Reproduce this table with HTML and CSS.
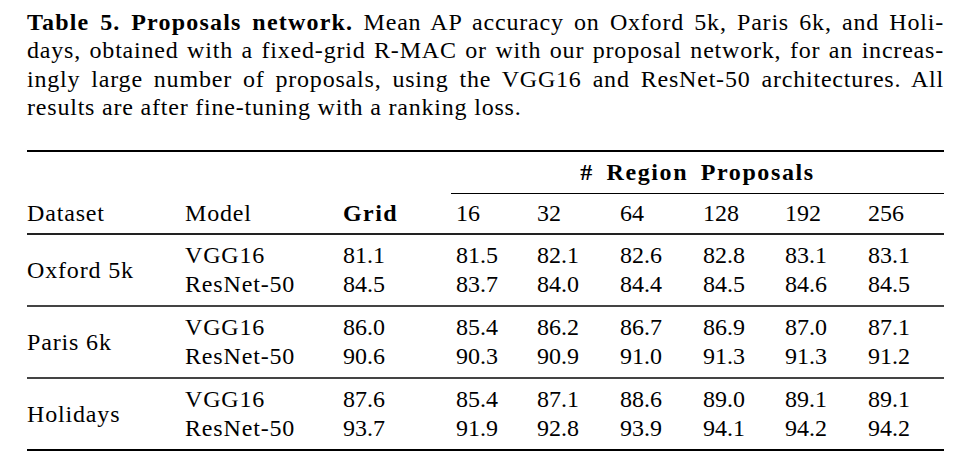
FILE: index.html
```html
<!DOCTYPE html>
<html lang="en">
<head>
<meta charset="utf-8">
<title>Table 5. Proposals network</title>
<link rel="stylesheet" href="styles.css">
</head>
<body>
<div class="page">
  <div class="caption">
    <span class="cap-line"><b class="cap-title">Table 5. Proposals network.</b> Mean AP accuracy on Oxford 5k, Paris 6k, and Holi-</span>
    <span class="cap-line">days, obtained with a fixed-grid R-MAC or with our proposal network, for an increas-</span>
    <span class="cap-line">ingly large number of proposals, using the VGG16 and ResNet-50 architectures. All</span>
    <span class="cap-line cap-last">results are after fine-tuning with a ranking loss.</span>
  </div>

  <table class="results">
    <colgroup>
      <col class="c-dataset">
      <col class="c-model">
      <col class="c-grid">
      <col class="c-16">
      <col class="c-32">
      <col class="c-64">
      <col class="c-128">
      <col class="c-192">
      <col class="c-256">
    </colgroup>
    <thead>
      <tr class="span-row">
        <th class="blank" colspan="3"></th>
        <th class="span-head" colspan="6"># Region Proposals</th>
      </tr>
      <tr class="head-row">
        <th class="lbl">Dataset</th>
        <th class="lbl">Model</th>
        <th class="lbl strong">Grid</th>
        <th class="num">16</th>
        <th class="num">32</th>
        <th class="num">64</th>
        <th class="num">128</th>
        <th class="num">192</th>
        <th class="num">256</th>
      </tr>
    </thead>
    <tbody class="group">
      <tr class="first">
        <td class="ds lbl" rowspan="2">Oxford 5k</td>
        <td class="lbl">VGG16</td>
        <td class="gridv">81.1</td>
        <td class="num">81.5</td><td class="num">82.1</td><td class="num">82.6</td><td class="num">82.8</td><td class="num">83.1</td><td class="num">83.1</td>
      </tr>
      <tr class="second">
        <td class="lbl">ResNet-50</td>
        <td class="gridv">84.5</td>
        <td class="num">83.7</td><td class="num">84.0</td><td class="num">84.4</td><td class="num">84.5</td><td class="num">84.6</td><td class="num">84.5</td>
      </tr>
    </tbody>
    <tbody class="group">
      <tr class="first">
        <td class="ds lbl" rowspan="2">Paris 6k</td>
        <td class="lbl">VGG16</td>
        <td class="gridv">86.0</td>
        <td class="num">85.4</td><td class="num">86.2</td><td class="num">86.7</td><td class="num">86.9</td><td class="num">87.0</td><td class="num">87.1</td>
      </tr>
      <tr class="second">
        <td class="lbl">ResNet-50</td>
        <td class="gridv">90.6</td>
        <td class="num">90.3</td><td class="num">90.9</td><td class="num">91.0</td><td class="num">91.3</td><td class="num">91.3</td><td class="num">91.2</td>
      </tr>
    </tbody>
    <tbody class="group">
      <tr class="first">
        <td class="ds lbl" rowspan="2">Holidays</td>
        <td class="lbl">VGG16</td>
        <td class="gridv">87.6</td>
        <td class="num">85.4</td><td class="num">87.1</td><td class="num">88.6</td><td class="num">89.0</td><td class="num">89.1</td><td class="num">89.1</td>
      </tr>
      <tr class="second">
        <td class="lbl">ResNet-50</td>
        <td class="gridv">93.7</td>
        <td class="num">91.9</td><td class="num">92.8</td><td class="num">93.9</td><td class="num">94.1</td><td class="num">94.2</td><td class="num">94.2</td>
      </tr>
    </tbody>
  </table>
</div>
</body>
</html>
```

FILE: styles.css
```css
html, body {
  margin: 0;
  padding: 0;
  background: #ffffff;
}

body {
  font-family: "Liberation Serif", "DejaVu Serif", serif;
  color: #000000;
  font-size: 24px;
}

.page {
  width: 917px;
  padding: 8px 29px 0 27px;
}

/* ---------- caption ---------- */
.caption {
  font-size: 24px;
  line-height: 28.33px;
  letter-spacing: 0.8px;
}

.cap-line {
  display: block;
  white-space: nowrap;
  text-align: justify;
  text-align-last: justify;
}

.cap-line.cap-last {
  text-align: left;
  text-align-last: left;
}

.cap-title {
  font-weight: bold;
  letter-spacing: 1.2px;
}

/* ---------- table ---------- */
.results {
  margin-top: 29px;
  width: 917px;
  table-layout: fixed;
  border-collapse: separate;
  border-spacing: 0;
  border-top: 2px solid #000;
  border-bottom: 2px solid #000;
  font-size: 24px;
  line-height: 29px;
}

.c-dataset { width: 158px; }
.c-model   { width: 158px; }
.c-grid    { width: 108px; }
.c-16      { width: 81px; }
.c-32      { width: 83px; }
.c-64      { width: 83px; }
.c-128     { width: 82px; }
.c-192     { width: 83px; }
.c-256     { width: 81px; }

.results th,
.results td {
  padding: 0;
  text-align: left;
  font-weight: normal;
  white-space: nowrap;
  vertical-align: baseline;
}

.results .lbl {
  letter-spacing: 0.035em;
}

.results .strong {
  font-weight: bold;
  letter-spacing: 0.06em;
}

.results .num {
  padding-left: 5px;
}

/* spanning header */
.span-row th {
  padding-top: 6px;
  padding-bottom: 7px;
}

.span-row .span-head {
  text-align: center;
  font-weight: bold;
  letter-spacing: 1.6px;
  word-spacing: 5px;
  border-bottom: 1px solid #000;
  padding-bottom: 6px;
}

/* column header */
.head-row th {
  padding-top: 5px;
  padding-bottom: 5px;
  border-bottom: 2px solid #222;
}

/* body groups */
.group .first td {
  padding-top: 6px;
}

.group .second td {
  padding-bottom: 6px;
}

.group .ds {
  vertical-align: middle;
  padding-top: 6px;
  padding-bottom: 6px;
}

.group + .group .first td {
  border-top: 2px solid #444;
}
```
